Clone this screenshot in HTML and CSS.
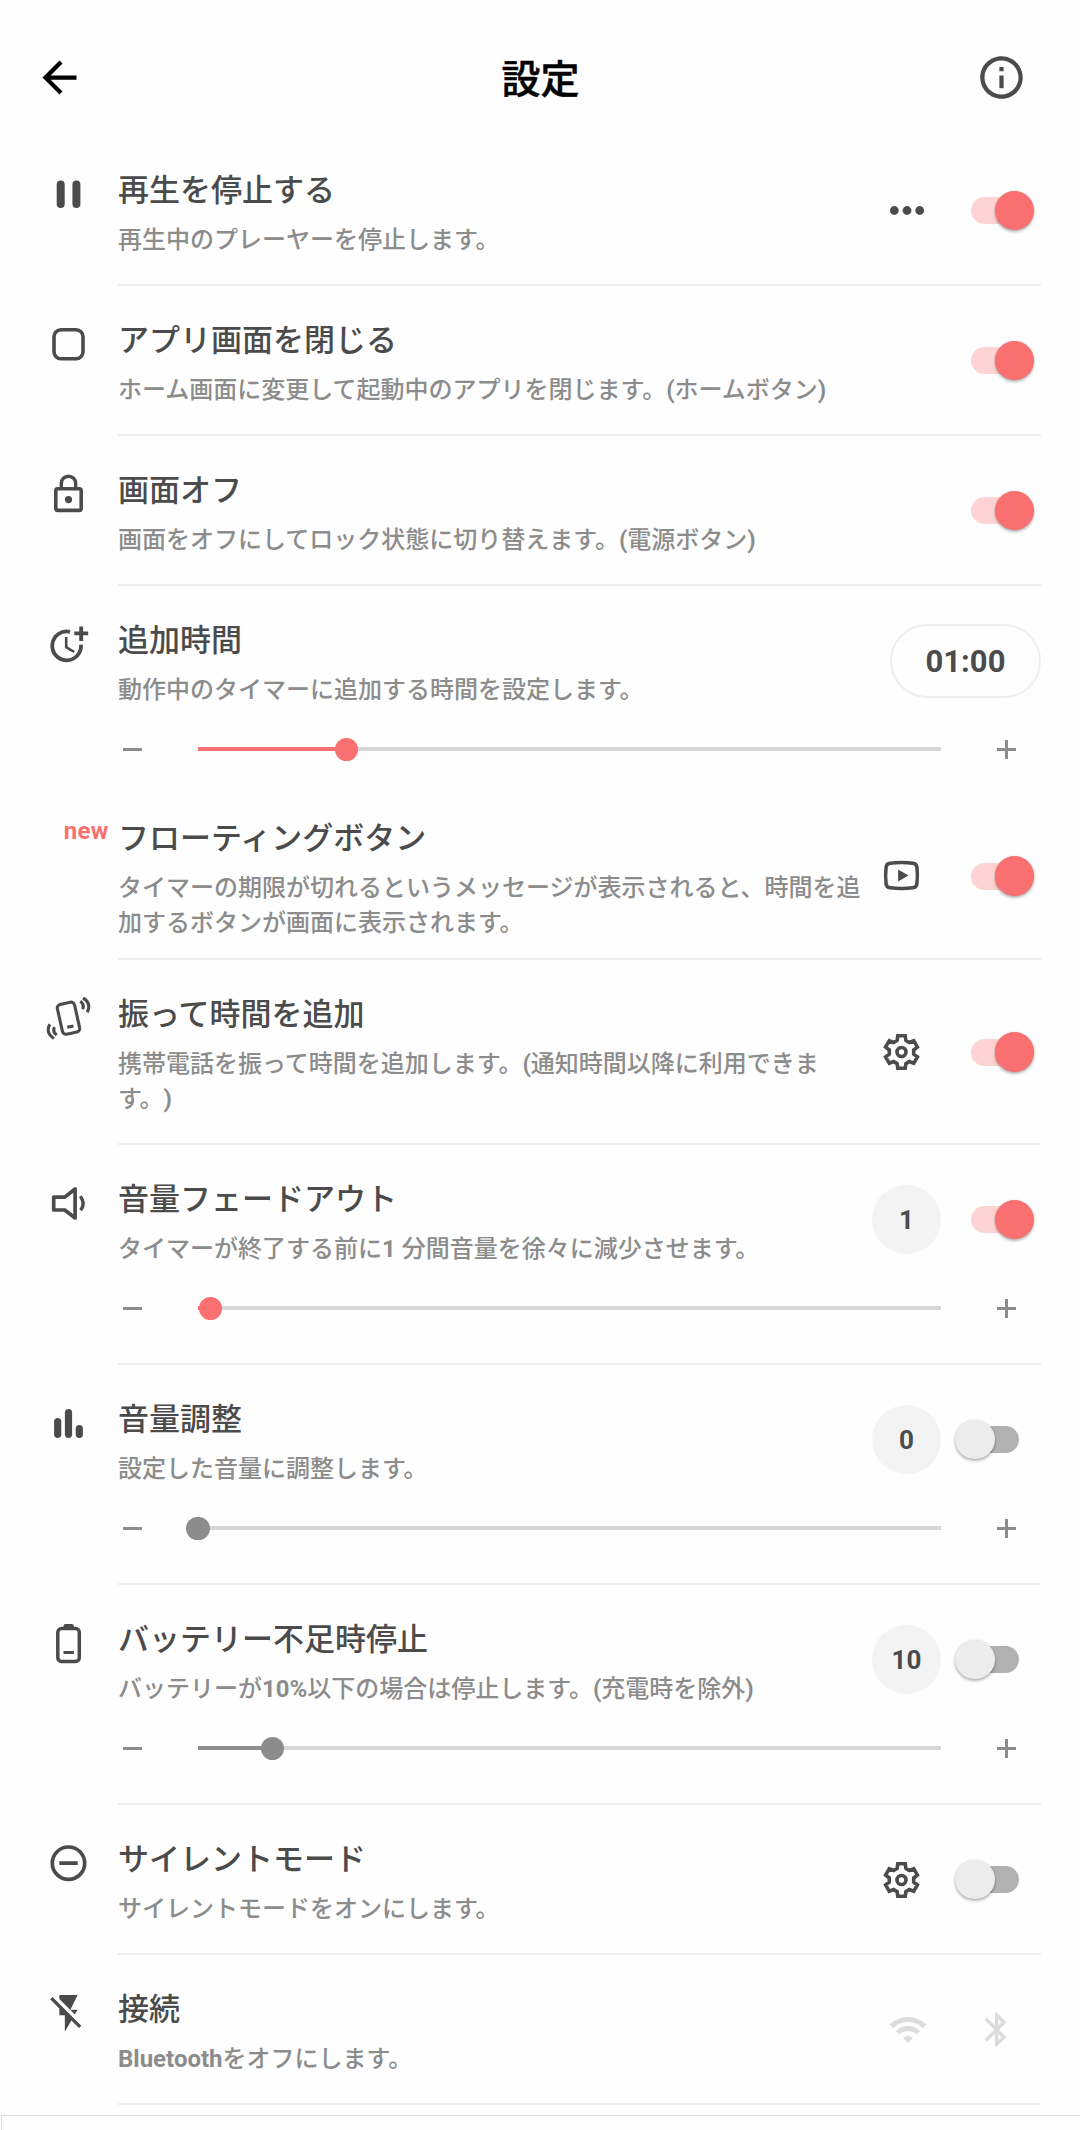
FILE: index.html
```html
<!DOCTYPE html>
<html lang="ja">
<head>
<meta charset="utf-8">
<title>設定</title>
<link rel="stylesheet" href="styles.css">
</head>
<body>
<svg class="defs" aria-hidden="true">
  <symbol id="gear" viewBox="-22 -22 44 44">
    <path d="M-3.7-16.2H3.7L4.4-11.6 7.8-9.6 12.2-11.3 15.9-4.9 12.2-2V2L15.9 4.9 12.2 11.3 7.8 9.6 4.4 11.6 3.7 16.2H-3.7L-4.4 11.6-7.8 9.6-12.2 11.3-15.9 4.9-12.2 2V-2L-15.9-4.9-12.2-11.3-7.8-9.6-4.4-11.6Z" fill="none" stroke="currentColor" stroke-width="3.6"/>
    <circle r="4.5" fill="none" stroke="currentColor" stroke-width="3.6"/>
  </symbol>
  <symbol id="minus" viewBox="0 0 29 30"><path d="M5 15.5H24" stroke="currentColor" stroke-width="3"/></symbol>
  <symbol id="plus" viewBox="0 0 29 30"><path d="M5 15.5H24M14.5 6V25" stroke="currentColor" stroke-width="3"/></symbol>
</svg>

<header class="topbar">
  <svg class="icon-lg back" viewBox="0 0 24 24"><path d="M20 11H7.83l5.59-5.59L12 4l-8 8 8 8 1.41-1.41L7.83 13H20v-2z" fill="currentColor"/></svg>
  <h1>設定</h1>
  <svg class="icon-lg" viewBox="0 0 24 24"><path d="M11 7h2v2h-2zm0 4h2v6h-2zm1-9C6.480 2 2 6.480 2 12s4.480 10 10 10 10-4.480 10-10S17.520 2 12 2zm0 18c-4.410 0-8-3.590-8-8s3.590-8 8-8 8 3.590 8 8-3.590 8-8 8z" fill="currentColor"/></svg>
</header>

<main>
  <section class="row">
    <div class="lead"><svg class="icon" viewBox="0 0 44 44"><rect x="10.200" y="8.200" width="8" height="27.500" rx="4" fill="currentColor"/><rect x="25.900" y="8.200" width="8" height="27.500" rx="4" fill="currentColor"/></svg></div>
    <div class="main">
      <div class="head">
        <div class="text"><h2>再生を停止する</h2><p>再生中のプレーヤーを停止します。</p></div>
        <svg class="icon action-more" viewBox="0 0 44 44"><g fill="currentColor"><circle cx="9.300" cy="21.500" r="4.400"/><circle cx="22" cy="21.500" r="4.400"/><circle cx="34.700" cy="21.500" r="4.400"/></g></svg>
        <div class="switch on"></div>
      </div>
    </div>
  </section>

  <section class="row">
    <div class="lead"><svg class="icon" viewBox="0 0 44 44"><rect x="7.500" y="7.300" width="29" height="29" rx="7" fill="none" stroke="currentColor" stroke-width="3.600"/></svg></div>
    <div class="main">
      <div class="head">
        <div class="text"><h2>アプリ画面を閉じる</h2><p>ホーム画面に変更して起動中のアプリを閉じます。<b>(</b>ホームボタン<b>)</b></p></div>
        <div class="switch on"></div>
      </div>
    </div>
  </section>

  <section class="row">
    <div class="lead"><svg class="icon" viewBox="0 0 44 44"><rect x="9.300" y="16.300" width="25.400" height="21.700" rx="1.800" fill="none" stroke="currentColor" stroke-width="3.600"/><path d="M14.800 16V11a7.200 7.200 0 0 1 14.400 0V16" fill="none" stroke="currentColor" stroke-width="3.400"/><circle cx="22" cy="27.200" r="3.600" fill="currentColor"/></svg></div>
    <div class="main">
      <div class="head">
        <div class="text"><h2>画面オフ</h2><p>画面をオフにしてロック状態に切り替えます。<b>(</b>電源ボタン<b>)</b></p></div>
        <div class="switch on"></div>
      </div>
    </div>
  </section>

  <section class="row">
    <div class="lead"><svg class="icon" viewBox="0 0 44 44"><g fill="none" stroke="currentColor"><path d="M23.500 9.500A14.400 14.400 0 1 0 34.500 22.300" stroke-width="3.800"/><path d="M34.700 4.200V18.500M27.800 11H41.700" stroke-width="3.900"/><path d="M19.700 14.500V24.800L27.700 29.600" stroke-width="2.600"/></g></svg></div>
    <div class="main undivided">
      <div class="head">
        <div class="text"><h2>追加時間</h2><p>動作中のタイマーに追加する時間を設定します。</p></div>
        <div class="time-pill">01:00</div>
      </div>
      <div class="slider active">
        <svg class="step"><use href="#minus"/></svg>
        <div class="track"><div class="fill" style="width:20%"></div></div>
        <svg class="step"><use href="#plus"/></svg>
      </div>
    </div>
  </section>

  <section class="row">
    <div class="lead"><span class="badge">new</span></div>
    <div class="main tight">
      <div class="head">
        <div class="text"><h2>フローティングボタン</h2><p>タイマーの期限が切れるというメッセージが表示されると、時間を追加するボタンが画面に表示されます。</p></div>
        <svg class="icon action" viewBox="0 0 44 44"><path d="M10.500 9.200Q22 7.900 33.500 9.200Q37 9.600 37.400 13Q38.400 21.500 37.400 30Q37 33.400 33.500 33.800Q22 35.100 10.500 33.800Q7 33.400 6.600 30Q5.600 21.500 6.600 13Q7 9.600 10.500 9.200Z" fill="none" stroke="currentColor" stroke-width="3.500"/><path d="M18.600 15.500V27.500L29 21.500Z" fill="currentColor"/></svg>
        <div class="switch on"></div>
      </div>
    </div>
  </section>

  <section class="row">
    <div class="lead"><svg class="icon" viewBox="0 0 44 44"><g fill="none" stroke="currentColor" stroke-width="3.100"><g transform="translate(22 21.800) rotate(-12.500)"><rect x="-8.800" y="-15.200" width="17.600" height="30.400" rx="3.600"/><path d="M-3.200 8.600H3.200"/></g><path d="M33.800 4.800Q38.200 8 36.100 12.800M36.600 1.500Q45.500 7.500 40.700 15.800M10.200 38.600Q5.800 35.600 7.900 30.800M7.400 42.100Q-1.500 36.100 3.300 27.800"/></g></svg></div>
    <div class="main">
      <div class="head">
        <div class="text"><h2>振って時間を追加</h2><p>携帯電話を振って時間を追加します。<b>(</b>通知時間以降に利用できます。<b>)</b></p></div>
        <svg class="icon action"><use href="#gear"/></svg>
        <div class="switch on"></div>
      </div>
    </div>
  </section>

  <section class="row">
    <div class="lead"><svg class="icon" viewBox="0 0 44 44"><g fill="none" stroke="currentColor" stroke-linejoin="round"><path d="M7.200 15.700H18.300L28.600 7.600V36.600L18.300 28.600H7.200Z" stroke-width="3.700"/><path d="M33.800 14.800Q39.500 22 34.200 28.800" stroke-width="3.400"/></g></svg></div>
    <div class="main">
      <div class="head">
        <div class="text"><h2>音量フェードアウト</h2><p>タイマーが終了する前に<b>1 </b>分間音量を徐々に減少させます。</p></div>
        <div class="count">1</div>
        <div class="switch on"></div>
      </div>
      <div class="slider active">
        <svg class="step"><use href="#minus"/></svg>
        <div class="track"><div class="fill" style="width:1.667%"></div></div>
        <svg class="step"><use href="#plus"/></svg>
      </div>
    </div>
  </section>

  <section class="row">
    <div class="lead"><svg class="icon" viewBox="0 0 44 44"><g fill="currentColor"><rect x="7.600" y="16.500" width="7.200" height="20" rx="3.600"/><rect x="18.400" y="7.500" width="7.200" height="29" rx="3.600"/><rect x="29.200" y="23.500" width="7.200" height="13" rx="3.600"/></g></svg></div>
    <div class="main">
      <div class="head">
        <div class="text"><h2>音量調整</h2><p>設定した音量に調整します。</p></div>
        <div class="count">0</div>
        <div class="switch"></div>
      </div>
      <div class="slider">
        <svg class="step"><use href="#minus"/></svg>
        <div class="track"><div class="fill" style="width:0%"></div></div>
        <svg class="step"><use href="#plus"/></svg>
      </div>
    </div>
  </section>

  <section class="row">
    <div class="lead"><svg class="icon" viewBox="0 0 44 44"><rect x="11.300" y="7.200" width="21.500" height="32.900" rx="3.800" fill="none" stroke="currentColor" stroke-width="3.500"/><path d="M17 7V4.600Q17 2.600 19 2.600H25.400Q27.400 2.600 27.400 4.600V7Z" fill="currentColor"/><path d="M17 31.200H27.400" stroke="currentColor" stroke-width="3"/></svg></div>
    <div class="main">
      <div class="head">
        <div class="text"><h2>バッテリー不足時停止</h2><p>バッテリーが<b>10%</b>以下の場合は停止します。<b>(</b>充電時を除外<b>)</b></p></div>
        <div class="count">10</div>
        <div class="switch"></div>
      </div>
      <div class="slider">
        <svg class="step"><use href="#minus"/></svg>
        <div class="track"><div class="fill" style="width:10%"></div></div>
        <svg class="step"><use href="#plus"/></svg>
      </div>
    </div>
  </section>

  <section class="row">
    <div class="lead"><svg class="icon" viewBox="0 0 44 44"><g fill="none" stroke="currentColor"><circle cx="22" cy="21.800" r="16.200" stroke-width="3.700"/><path d="M12.800 21.800H31.200" stroke-width="3.700"/></g></svg></div>
    <div class="main">
      <div class="head">
        <div class="text"><h2>サイレントモード</h2><p>サイレントモードをオンにします。</p></div>
        <svg class="icon action"><use href="#gear"/></svg>
        <div class="switch"></div>
      </div>
    </div>
  </section>

  <section class="row">
    <div class="lead"><svg class="icon" viewBox="0 0 24 24"><path d="M3.270 3L2 4.270l5 5V13h3v9l3.580-6.140L17.730 20 19 18.730 3.270 3zM17 10h-4l4-8H7v2.180l8.460 8.460L17 10z" fill="currentColor"/></svg></div>
    <div class="main">
      <div class="head">
        <div class="text"><h2>接続</h2><p><b>Bluetooth</b>をオフにします。</p></div>
        <svg class="icon wifi" viewBox="0 0 44 44"><g fill="none" stroke="currentColor" stroke-width="5"><path d="M5.300 18.300A23.600 23.600 0 0 1 38.700 18.300M11.750 24.750A14.500 14.500 0 0 1 32.250 24.750"/></g><path d="M22 35L17 30A7 7 0 0 1 27 30Z" fill="currentColor"/></svg>
        <svg class="icon bluetooth" viewBox="0 0 24 24"><path d="M17.710 7.710L12 2h-1v7.590L6.410 5 5 6.410 10.590 12 5 17.590 6.410 19 11 14.410V22h1l5.710-5.710-4.300-4.290 4.300-4.290zM13 5.830l1.880 1.880L13 9.590V5.830zm1.880 10.460L13 18.170v-3.760l1.880 1.880z" fill="currentColor"/></svg>
      </div>
    </div>
  </section>
</main>
<aside class="banner"></aside>
</body>
</html>
```
FILE: styles.css
```css
* { box-sizing: border-box; }

body {
  margin: 0;
  height: 2130px;
  overflow: hidden;
  display: flex;
  flex-direction: column;
  background: #fefefe;
  color: #4b4b4b;
  font-family: Roboto, "Noto Sans CJK JP", sans-serif;
  font-weight: 500;
  text-spacing-trim: space-all;
}

svg { display: block; flex: none; }
.defs { position: absolute; width: 0; height: 0; }
.icon { width: 44px; height: 44px; }
.icon-lg { width: 51px; height: 51px; }

.topbar {
  flex: none;
  height: 136px;
  padding: 19px 53px 0 34px;
  display: flex;
  align-items: center;
  justify-content: space-between;
}
.topbar h1 {
  margin: 0;
  padding: 5px 0 0 20px;
  font-size: 39px;
  line-height: 56px;
  font-weight: 500;
  color: #000;
  -webkit-text-stroke: .5px #000;
}
.back { color: #000; }

.row { display: flex; padding-right: 39px; }

.lead {
  flex: none;
  width: 118px;
  padding: 36px 0 0 46px;
}
.lead .icon { transform: translate(.5px, .4px); }
.badge {
  display: block;
  margin-top: -3px;
  padding-right: 9.500px;
  text-align: right;
  font-size: 24px;
  line-height: 28px;
  letter-spacing: .2px;
  font-weight: 700;
  color: #fa7070;
}

.main { flex: 1; border-bottom: 2px solid #eee; }
.main.undivided { border-bottom: 0; }
.main.tight .head { padding-bottom: 18px; }

.head {
  display: flex;
  align-items: center;
  padding: 28px 7px 27px 0;
}

.text {
  flex: 1;
  max-width: 752px;
  margin: 0 auto -1px 0;
  padding-top: 4px;
}
.text h2 {
  margin: 0 0 4px;
  font-size: 31px;
  line-height: 46px;
  font-weight: 500;
}
.text p {
  margin: 0;
  padding-top: 5px;
  font-size: 24px;
  line-height: 35px;
  color: #8c8c8c;
}
.text b { font-weight: 700; line-height: 1; }

.action { margin-right: 32px; transform: translateX(.5px); }
.action-more { margin-right: 26px; }
.wifi { margin-right: 46px; color: #dcdcdc; }
.bluetooth { width: 41.300px; height: 41.300px; margin-right: 17px; color: #dcdcdc; }

.switch {
  flex: none;
  position: relative;
  width: 79px;
  height: 40px;
  padding: 6.500px 15px 6.500px 16px;
}
.switch::before {
  content: "";
  display: block;
  height: 27px;
  border-radius: 14px;
  background: #b1b1b1;
}
.switch::after {
  content: "";
  position: absolute;
  left: 0;
  top: 0;
  width: 39.500px;
  height: 39.500px;
  border-radius: 50%;
  background: #ececec;
  box-shadow: 0 2px 3px rgba(0, 0, 0, .28), 0 0 2px rgba(0, 0, 0, .12);
}
.switch.on::before { background: #fdd3d3; }
.switch.on::after { left: 39.500px; background: #fa7070; }

.count {
  flex: none;
  width: 69px;
  height: 69px;
  margin-right: 14px;
  border-radius: 50%;
  background: #f3f3f3;
  text-align: center;
  font-size: 26px;
  line-height: 70px;
  font-weight: 700;
}

.time-pill {
  flex: none;
  width: 151px;
  height: 74px;
  margin-right: -7px;
  border: 2px solid #eee;
  border-radius: 37px;
  text-align: center;
  font-size: 31px;
  line-height: 72px;
  font-weight: 700;
}

.slider {
  display: flex;
  align-items: center;
  gap: 51px;
  height: 70px;
  padding: 0 20px 40px 0;
  color: #8c8c8c;
}
.undivided .slider { height: 50px; padding-bottom: 20px; }
.step { width: 29px; height: 30px; }
.track { flex: 1; height: 4px; background: #d6d6d6; }
.fill { position: relative; height: 4px; background: #8c8c8c; }
.fill::after {
  content: "";
  position: absolute;
  right: -11.750px;
  top: -9.500px;
  width: 23.500px;
  height: 23.500px;
  border-radius: 50%;
  background: #8c8c8c;
}
.active .fill, .active .fill::after { background: #fa7070; }

.banner {
  flex: none;
  height: 20px;
  margin: 10px 0 0 1px;
  border: solid #dedede;
  border-width: 1px 0 0 1px;
}
```
